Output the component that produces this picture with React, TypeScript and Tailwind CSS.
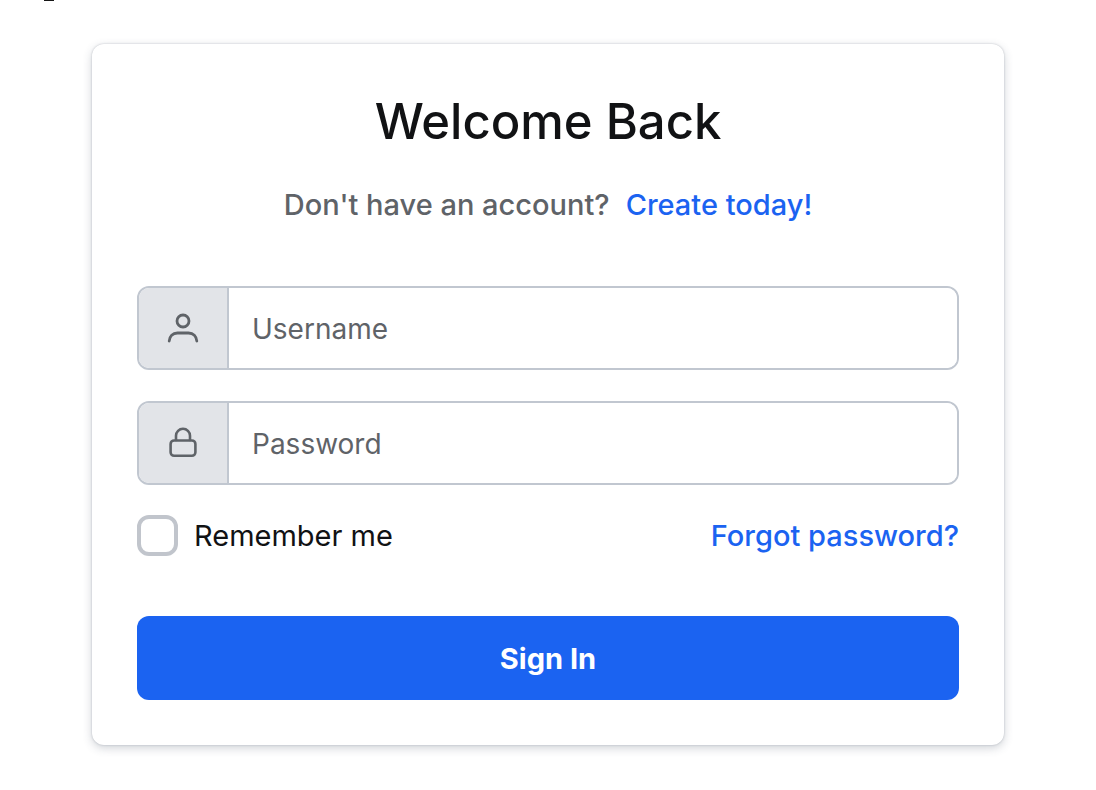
import type { ReactNode } from "react";

function UserIcon() {
  return (
    <svg role="img" aria-label="Username" width="32" height="32" viewBox="0 0 32 32" fill="none" stroke="currentColor" strokeWidth="2.8" strokeLinecap="round">
      <circle cx="16" cy="9" r="6" />
      <path d="M2.2 29C2.6 24.2 5.6 21 10.5 21H21.5C26.4 21 29.4 24.2 29.8 29" />
    </svg>
  );
}

function LockIcon() {
  return (
    <svg role="img" aria-label="Password" width="32" height="32" viewBox="0 0 32 32" fill="none" stroke="currentColor" strokeWidth="2.6" strokeLinecap="round" strokeLinejoin="round">
      <rect x="3.6" y="13.5" width="24.8" height="15.3" rx="3.5" />
      <path d="M9 13V8.8a7 7 0 0 1 14 0V13" />
    </svg>
  );
}

type FieldProps = { id: string; label: string; type: string; icon: ReactNode };

function Field({ id, label, type, icon }: FieldProps) {
  return (
    <div className="flex h-[84px] overflow-hidden rounded-xl border-2 border-[#c1c7d0]">
      <label htmlFor={id} className="flex w-[90px] shrink-0 items-center justify-center border-r-2 border-[#c1c7d0] bg-[#e2e4e8] text-[#5f6368]">
        {icon}
      </label>
      <input id={id} type={type} placeholder={label} className="min-w-0 flex-1 bg-white px-[23px] pt-0.5 text-[28px] text-[#111214] outline-none placeholder:text-[#5f6368]" />
    </div>
  );
}

export default function App() {
  return (
    <main className="min-h-screen bg-white pb-11 font-['Inter','Liberation_Sans',sans-serif] text-[29px] leading-9 text-[#111214]">
      <div className="ml-11 h-px w-[10px] bg-[#161616]" />
      <section className="mx-[92px] mt-[43px] rounded-xl bg-white px-[45px] pt-[46px] pb-[45px] shadow-[0_0_2px_rgba(60,70,90,0.3),0_3px_10px_rgba(60,70,90,0.24)]">
        <h1 className="text-center text-[49px] leading-[64px] font-medium">Welcome Back</h1>
        <p className="mt-[33px] flex justify-center gap-4 font-medium text-[#5f6368]">
          Don't have an account?
          <a href="#create" className="text-[#1b63f1]">Create today!</a>
        </p>
        <form className="mt-[63px]" onSubmit={(event) => event.preventDefault()}>
          <div className="flex flex-col gap-[31px]">
            <Field id="username" label="Username" type="text" icon={<UserIcon />} />
            <Field id="password" label="Password" type="password" icon={<LockIcon />} />
          </div>
          <div className="mt-[30px] flex items-center justify-between">
            <label className="flex items-center gap-4">
              <input type="checkbox" className="size-[41px] shrink-0 appearance-none rounded-xl border-4 border-[#c1c5cc] bg-white checked:border-[#1b63f1] checked:bg-[#1b63f1]" />
              Remember me
            </label>
            <a href="#forgot" className="font-medium text-[#1b63f1]">Forgot password?</a>
          </div>
          <button type="submit" className="mt-[60px] h-[84px] w-full rounded-xl bg-[#1b63f1] pt-0.5 font-bold text-white">Sign In</button>
        </form>
      </section>
    </main>
  );
}
